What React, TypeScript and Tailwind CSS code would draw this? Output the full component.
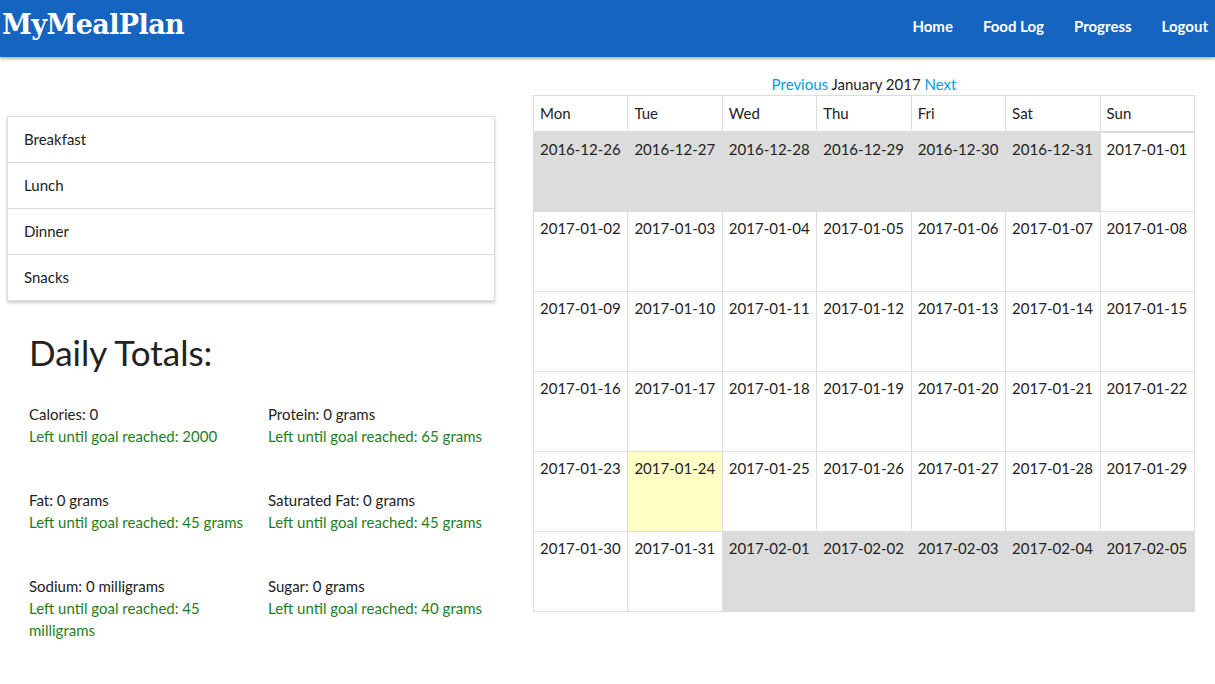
import React from "react";

const weeks: string[][] = [
  ["2016-12-26","2016-12-27","2016-12-28","2016-12-29","2016-12-30","2016-12-31","2017-01-01"],
  ["2017-01-02","2017-01-03","2017-01-04","2017-01-05","2017-01-06","2017-01-07","2017-01-08"],
  ["2017-01-09","2017-01-10","2017-01-11","2017-01-12","2017-01-13","2017-01-14","2017-01-15"],
  ["2017-01-16","2017-01-17","2017-01-18","2017-01-19","2017-01-20","2017-01-21","2017-01-22"],
  ["2017-01-23","2017-01-24","2017-01-25","2017-01-26","2017-01-27","2017-01-28","2017-01-29"],
  ["2017-01-30","2017-01-31","2017-02-01","2017-02-02","2017-02-03","2017-02-04","2017-02-05"],
];

const totals = [
  ["Calories: 0", "Left until goal reached: 2000"],
  ["Protein: 0 grams", "Left until goal reached: 65 grams"],
  ["Fat: 0 grams", "Left until goal reached: 45 grams"],
  ["Saturated Fat: 0 grams", "Left until goal reached: 45 grams"],
  ["Sodium: 0 milligrams", "Left until goal reached: 45 milligrams"],
  ["Sugar: 0 grams", "Left until goal reached: 40 grams"],
];

export default function App() {
  return (
    <div className="min-h-[684px] bg-white text-[#222] [font-family:Lato,'Noto_Sans',sans-serif]">
      <nav className="h-[57px] bg-[#1565c0] flex items-center justify-between shadow-[0_2px_3px_rgba(0,0,0,0.3)]">
        <div className="pl-[2px] text-white text-[27px] font-bold [font-family:'DejaVu_Serif',serif] tracking-[-0.6px] -mt-[7px]">MyMealPlan</div>
        <div className="flex items-center text-white text-[15px] font-bold pr-[7px] -mt-[4px]">
          <a className="px-[15px]">Home</a>
          <a className="px-[15px]">Food Log</a>
          <a className="px-[15px]">Progress</a>
          <a className="pl-[15px]">Logout</a>
        </div>
      </nav>
      <div className="flex">
        <div className="w-[488px] ml-[7px] shrink-0">
          <div className="mt-[59px] border border-[#ddd] shadow-[0_2px_3px_rgba(0,0,0,0.2)] text-[15px] text-[#222]">
            {["Breakfast", "Lunch", "Dinner", "Snacks"].map((m, i) => (
              <div key={m} className={`flex items-center pl-[16px] ${i < 3 ? "h-[46px] border-b border-[#ddd]" : "h-[45px]"}`}>{m}</div>
            ))}
          </div>
          <div className="pl-[22px]">
            <h3 className="mt-[29px] text-[35px] leading-[45px] text-[#222]">Daily Totals:</h3>
            <div className="grid grid-cols-[239px_1fr] mt-[28px] text-[15px] leading-[22px]">
              {totals.map(([a, b]) => (
                <div key={a} className="h-[86px] pr-[10px]">
                  <div>{a}</div>
                  <div className="text-[#1e7e1e]">{b}</div>
                </div>
              ))}
            </div>
          </div>
        </div>
        <div className="ml-[38px] w-[662px]">
          <div className="mt-[16px] h-[22px] text-center text-[15px] leading-[22px]">
            <a className="text-[#039be5]">Previous</a> January 2017 <a className="text-[#039be5]">Next</a>
          </div>
          <table className="w-[662px] border-collapse table-fixed text-[15px] text-[#222]">
            <thead>
              <tr>
                {["Mon","Tue","Wed","Thu","Fri","Sat","Sun"].map((d) => (
                  <th key={d} className="h-[36px] border border-[#ddd] border-b-2 text-left font-normal pl-[6px]">{d}</th>
                ))}
              </tr>
            </thead>
            <tbody>
              {weeks.map((w, wi) => (
                <tr key={wi}>
                  {w.map((d) => {
                    const other = !d.startsWith("2017-01");
                    const today = d === "2017-01-24";
                    return (
                      <td key={d} className={`h-[80px] align-top pt-[5px] pl-[6px] border border-[#ddd] ${other ? "bg-[#dcdcdc]" : today ? "bg-[#ffffc4]" : ""}`}>{d}</td>
                    );
                  })}
                </tr>
              ))}
            </tbody>
          </table>
        </div>
      </div>
    </div>
  );
}
